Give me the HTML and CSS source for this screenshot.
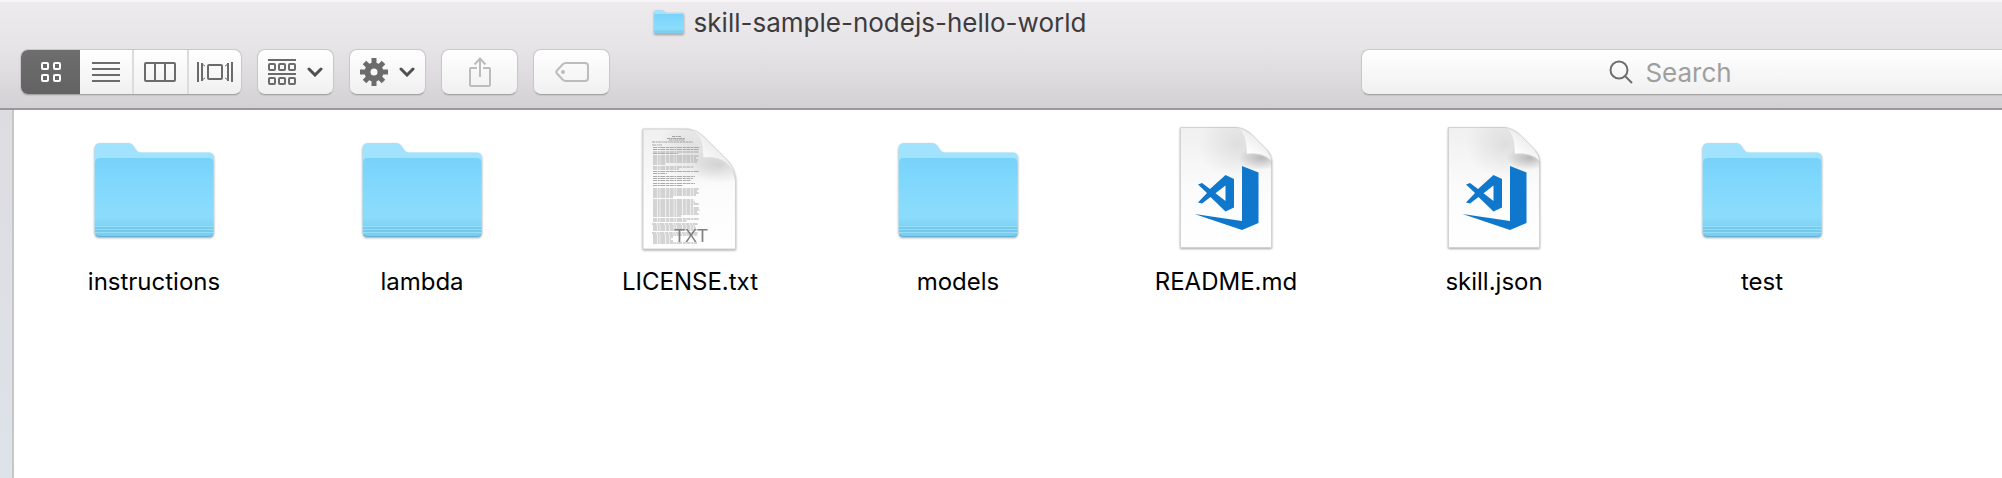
FILE: index.html
```html
<!DOCTYPE html>
<html lang="en">
<head>
<meta charset="utf-8">
<title>skill-sample-nodejs-hello-world</title>
<link rel="stylesheet" href="styles.css">
</head>

<body>
<!-- shared icons -->
<svg class="defs" aria-hidden="true">
    <defs>
        <linearGradient id="folderFront" x1="0" y1="0" x2="0" y2="1">
            <stop offset="0" stop-color="#77d2fa"/>
            <stop offset="0.45" stop-color="#84dafd"/>
            <stop offset="0.75" stop-color="#8bdcfb"/>
            <stop offset="0.87" stop-color="#7fd2f4"/>
            <stop offset="1" stop-color="#7acbee"/>
        </linearGradient>
        <linearGradient id="paper" x1="0" y1="0" x2="0" y2="1">
            <stop offset="0" stop-color="#f0f0f0"/>
            <stop offset="0.5" stop-color="#fbfbfb"/>
            <stop offset="1" stop-color="#ffffff"/>
        </linearGradient>
        <linearGradient id="curl" x1="0.1" y1="0.95" x2="0.6" y2="0.3">
            <stop offset="0" stop-color="#e2e2e2"/>
            <stop offset="0.35" stop-color="#ffffff"/>
            <stop offset="1" stop-color="#ececec"/>
        </linearGradient>
        <radialGradient id="curlShade">
            <stop offset="0" stop-color="#000" stop-opacity="0.25"/>
            <stop offset="1" stop-color="#000" stop-opacity="0"/>
        </radialGradient>
        <clipPath id="codeClip"><path d="M18.500 2.500H75Q84 4 90 10L104 24Q109 29 109.500 36V122.500H18.500Z"/></clipPath>
        <clipPath id="txtClip"><path d="M17 4H62Q71 5 78 12L101 35Q109 44 109.500 56V124H17Z"/></clipPath>
    </defs>

    <symbol id="folder" viewBox="0 0 128 128">
        <path d="M4.500 24Q4.500 18 10 18H38Q41.500 18 43.500 21L46 25Q48 27.500 51 27.500H118.500Q124 27.500 124 33V106Q124 112 119 112H9.500Q4.500 112 4.500 106Z" fill="#a1e3fe"/>
        <path d="M5 38Q5 33 10 33H118.500Q123.500 33 123.500 38V107Q123.500 112 119 112H9.500Q5 112 5 107Z" fill="url(#folderFront)"/>
        <path d="M5 101.500H123.500M5 104.500H123.500M5 107.500H123.500" stroke="#93def8" stroke-width="1"/>
        <path d="M5 103H123.500M5 106H123.500" stroke="#6fc1e6" stroke-width="1"/>
        <path d="M5.500 110Q7 111.500 10 111.500H118.500Q122 111.500 123 110" fill="none" stroke="#62afd5" stroke-width="1"/>
    </symbol>

    <symbol id="code-file" viewBox="0 0 128 128">
        <path d="M18.500 2.500H75Q84 4 90 10L104 24Q109 29 109.500 36V122.500H18.500Z" fill="url(#paper)" stroke="#d2d2d2"/>
        <g clip-path="url(#codeClip)">
            <ellipse cx="76" cy="20" rx="40" ry="34" fill="url(#curlShade)" opacity="0.35"/>
            <ellipse cx="100" cy="33" rx="24" ry="12" fill="url(#curlShade)" opacity="0.9"/>
        </g>
        <path d="M75 2.500C83 8 84 18 84.500 29Q101 27 109.500 36Q109 30 104 24L90 10Q83 4 75 2.500Z" fill="url(#curl)" stroke="#d8d8d8" stroke-width="0.700"/>
        <path d="M80 41L96.500 47.500V98L80 105L32.500 89L80 96ZM72 54L63.500 50L48 64L40 58L36 59.500L45 68L36 77.500L40 78.500L48.500 72L63.500 86.500L72 82.500ZM63.500 60.500V76L53.500 68.300Z" fill="#0f78cd" fill-rule="evenodd"/>
    </symbol>

    <symbol id="chevron" viewBox="0 0 16 10">
        <path d="M2 2L8 8L14 2" fill="none" stroke="#505050" stroke-width="3" stroke-linecap="round"/>
    </symbol>
</svg>

<header class="window-header">
    <h1 class="window-title">
        <svg class="title-folder" viewBox="4 17 121 96" preserveAspectRatio="none" aria-hidden="true"><use href="#folder" width="128" height="128"/></svg>
        skill-sample-nodejs-hello-world
    </h1>

    <div class="toolbar">
        <div class="view-switch">
            <button class="view active" type="button" aria-label="Icons" aria-pressed="true">
                <svg width="20" height="20" fill="none" stroke="currentColor" stroke-width="2"><rect x="1" y="1" width="6" height="6" rx="1"/><rect x="13" y="1" width="6" height="6" rx="1"/><rect x="1" y="13" width="6" height="6" rx="1"/><rect x="13" y="13" width="6" height="6" rx="1"/></svg>
            </button>
            <button class="view" type="button" aria-label="List">
                <svg width="28" height="20" stroke="currentColor" stroke-width="2"><path d="M0 1h28M0 7h28M0 13h28M0 19h28"/></svg>
            </button>
            <button class="view" type="button" aria-label="Columns">
                <svg width="32" height="20" fill="none" stroke="currentColor" stroke-width="2"><rect x="1" y="1" width="30" height="18" rx="1"/><path d="M11 1v18M21 1v18"/></svg>
            </button>
            <button class="view" type="button" aria-label="Cover Flow">
                <svg width="36" height="20" fill="none" stroke="currentColor" stroke-width="2"><path d="M1 0v20M35 0v20"/><rect x="11" y="3" width="14" height="14" rx="1"/><path d="M5 1v18M31 1v18"/><path d="M5 2l3 2M5 18l3-2M31 2l-3 2M31 18l-3-2" stroke-width="1"/></svg>
            </button>
        </div>

        <button class="tool" type="button" aria-label="Arrange">
            <svg width="28" height="26" fill="none" stroke="currentColor" stroke-width="2"><path d="M0 1h28M0 15h28"/><rect x="1" y="5" width="6" height="6" rx="1"/><rect x="11" y="5" width="6" height="6" rx="1"/><rect x="21" y="5" width="6" height="6" rx="1"/><rect x="1" y="19" width="6" height="6" rx="1"/><rect x="11" y="19" width="6" height="6" rx="1"/><rect x="21" y="19" width="6" height="6" rx="1"/></svg>
            <svg width="16" height="10"><use href="#chevron"/></svg>
        </button>
        <button class="tool" type="button" aria-label="Action">
            <svg width="28" height="28" viewBox="-14 -14 28 28"><circle r="6.500" fill="none" stroke="currentColor" stroke-width="6"/><path d="M0-14V-8M0 14V8M-14 0H-8M14 0H8M-9.500-9.500L-6-6M9.500 9.500L6 6M-9.500 9.500L-6 6M9.500-9.500L6-6" stroke="currentColor" stroke-width="5"/></svg>
            <svg width="16" height="10"><use href="#chevron"/></svg>
        </button>
        <button class="tool" type="button" aria-label="Share" disabled>
            <svg width="22" height="30" fill="none" stroke="currentColor" stroke-width="2"><path d="M8 11H2Q1 11 1 12V28Q1 29 2 29H20Q21 29 21 28V12Q21 11 20 11H14M11 20V2M5.500 7.500L11 1.500L16.500 7.500"/></svg>
        </button>
        <button class="tool" type="button" aria-label="Edit Tags" disabled>
            <svg width="34" height="20" fill="none" stroke="currentColor" stroke-width="2"><path d="M11 1H30Q33 1 33 4V16Q33 19 30 19H11Q9 19 7.500 17.500L2 11.500Q0.500 10 2 8.500L7.500 2.500Q9 1 11 1Z"/><circle cx="8" cy="10" r="2" fill="currentColor" stroke="none"/></svg>
        </button>

        <label class="search">
            <svg width="24" height="24" fill="none" stroke="#6e6e6e" stroke-width="2"><circle cx="10" cy="10" r="8.500"/><path d="M16 16L23 23"/></svg>
            <input class="search-input" type="search" placeholder="Search" aria-label="Search">
        </label>
    </div>
</header>

<div class="content">
    <aside class="sidebar"></aside>
    <main class="files">
        <a class="file" href="#"><svg class="file-icon" aria-hidden="true"><use href="#folder"/></svg><span>instructions</span></a>
        <a class="file" href="#"><svg class="file-icon" aria-hidden="true"><use href="#folder"/></svg><span>lambda</span></a>
        <a class="file" href="#">
            <svg class="file-icon" viewBox="0 0 128 128" aria-hidden="true">
                <path d="M17 4H62Q71 5 78 12L101 35Q109 44 109.500 56V124H17Z" fill="url(#paper)" stroke="#d2d2d2"/>
                <g clip-path="url(#txtClip)">
                    <ellipse cx="66" cy="26" rx="36" ry="34" fill="url(#curlShade)" opacity="0.35"/>
                    <ellipse cx="94" cy="40" rx="30" ry="18" fill="url(#curlShade)" opacity="0.55"/>
                </g>
                <path d="M46 11.500h9M41 13.500h18M43 15h16M26 17h41" stroke="#999" stroke-dasharray="3 0.600 2 0.500" stroke-width="0.900"/>
                <path d="M26 20h10M27 22.500h47M27 24.500h46M27 27h46M27 28.500h25M27 31h46M27 33h43M27 35h45M27 37h44M27 39h13M27 42h41M27 44h26M27 46.500h46M27 48.500h14M27 51.500h42M27 53.500h40M27 55.500h38M27 58.500h42M27 60.500h30M27 64h46M27 66h44M27 68h46M27 70h43M27 72h20M27 75h41M27 77h42M27 79h46M27 81h40M27 83h46M27 85h47M27 87h44M27 89h46M27 91h28M27 94h46M27 96h34M26 99h46M27 101h42M27 103h43M27 105h44M26 108h46M27 110h44M27 112h20M27 114h18M27 116h20M27 118h44" stroke="#aaa" stroke-dasharray="4 0.700 2 0.600 5 0.800 3 0.600" stroke-width="1.200"/>
                <path d="M62 4C76 9 76.500 22 77 33C92 31 106 36 109.500 56Q109 44 101 35L78 12Q71 5 62 4Z" fill="url(#curl)" stroke="#d8d8d8" stroke-width="0.700"/>
                <text class="file-kind" x="48" y="117">TXT</text>
            </svg>
            <span>LICENSE.txt</span>
        </a>
        <a class="file" href="#"><svg class="file-icon" aria-hidden="true"><use href="#folder"/></svg><span>models</span></a>
        <a class="file" href="#"><svg class="file-icon" aria-hidden="true"><use href="#code-file"/></svg><span>README.md</span></a>
        <a class="file" href="#"><svg class="file-icon" aria-hidden="true"><use href="#code-file"/></svg><span>skill.json</span></a>
        <a class="file" href="#"><svg class="file-icon" aria-hidden="true"><use href="#folder"/></svg><span>test</span></a>
    </main>
</div>
</body>
</html>
```

FILE: styles.css
```css
*{box-sizing:border-box;}
body{margin:0; min-height:100vh; display:flex; flex-direction:column; background:#fff; color:#000; font-family:Inter,"Liberation Sans",sans-serif; font-size:24px;}
svg{display:block; flex:none;}
.defs{position:absolute; width:0; height:0;}

/* header */
.window-header{padding-bottom:13px; background:linear-gradient(#eeebee,#e6e4e7 45%,#d3d1d4); border-bottom:2px solid #99979b; box-shadow:inset 0 2px #f7f5f7;}
.window-title{display:flex; align-items:center; justify-content:center; gap:10px; height:44px; margin:0 0 5px; padding-right:262px; font-size:26px; font-weight:400; color:#3d3b3e;}
.title-folder{width:30px; height:24px; filter:drop-shadow(0 1px 1px rgba(0,0,0,.35));}

/* toolbar */
.toolbar{display:flex; gap:15px;}
.view-switch,.tool,.search{height:46px; border:1px solid #c9c7ca; border-bottom-color:#a5a3a6; border-radius:8px; background:linear-gradient(#fff,#f0f0f0); box-shadow:0 1px 1px rgba(0,0,0,.08);}
.view-switch{display:flex; width:222px; margin-left:20px; overflow:hidden;}
.view{display:flex; align-items:center; justify-content:center; flex:1; padding:0; border:0; border-right:2px solid #dcdcdc; background:none; color:#6b6b6b;}
.view:last-child{border-right:0;}
.view.active{flex:0 0 59px; border-right:0; background:linear-gradient(#6e6e6e,#626262); color:#fff;}
.tool{display:flex; align-items:center; justify-content:center; gap:11px; width:77px; padding:0; color:#6b6b6b;}
.tool:disabled{color:#bcbcbc;}
.search{display:flex; align-items:center; gap:12px; flex:0 0 32%; min-width:0; margin-left:auto; padding-left:247px; border-right:0; border-radius:8px 0 0 8px;}
.search-input{flex:1; min-width:0; padding:0; border:0; outline:0; background:none; font:inherit; font-size:26px;}
.search-input::placeholder{color:#9f9f9f; opacity:1;}

/* files */
.content{display:flex; flex:1;}
.sidebar{flex:0 0 14px; border-right:2px solid #c6c6c8; background:linear-gradient(#dddce1,#dde3e9);}
.files{flex:1; display:grid; grid-template-columns:repeat(auto-fill,268px); align-content:start; padding:15px 0 0 6px;}
.file{display:flex; flex-direction:column; align-items:center; gap:13px; color:#000; line-height:32px; text-decoration:none;}
.file-icon{width:128px; height:128px; filter:drop-shadow(0 1px 1px rgba(0,0,0,.35));}
.file-kind{font-family:"Liberation Sans",sans-serif; font-size:18px; fill:#808080;}
```
